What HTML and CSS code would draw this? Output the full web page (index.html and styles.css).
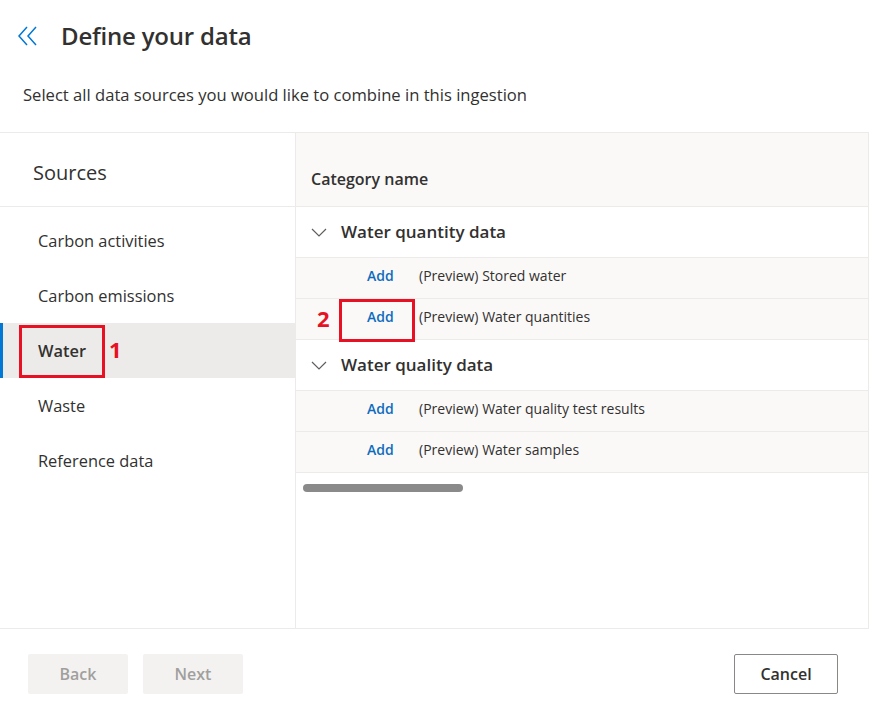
FILE: index.html
```html
<!DOCTYPE html>
<html>
<head>
<meta charset="utf-8">
<link rel="stylesheet" href="styles.css">
</head>
<body>
<div class="page">
  <header class="head">
    <div class="title-row">
      <svg class="back-icon" width="22" height="22" viewBox="0 0 22 22"><path d="M10 2 L2 11 L10 20 M19 2 L11 11 L19 20" fill="none" stroke="#0078d4" stroke-width="1.5"/></svg>
      <h1 class="title">Define your data</h1>
    </div>
    <p class="subtitle">Select all data sources you would like to combine in this ingestion</p>
  </header>
  <main class="main">
    <nav class="sources">
      <div class="sources-head">Sources</div>
      <ul class="src-list">
        <li class="src-item">Carbon activities</li>
        <li class="src-item">Carbon emissions</li>
        <li class="src-item selected"><span class="mark mark1">Water</span><span class="num num1">1</span></li>
        <li class="src-item">Waste</li>
        <li class="src-item">Reference data</li>
      </ul>
    </nav>
    <section class="cats">
      <div class="cats-head">Category name</div>
      <div class="group">
        <svg class="chev" width="16" height="10" viewBox="0 0 16 10"><path d="M1 1 L8 8 L15 1" fill="none" stroke="#605e5c" stroke-width="1.2"/></svg>
        <span>Water quantity data</span>
      </div>
      <div class="row"><span class="add">Add</span><span class="name">(Preview) Stored water</span></div>
      <div class="row"><span class="num num2">2</span><span class="add mark2">Add</span><span class="name">(Preview) Water quantities</span></div>
      <div class="group">
        <svg class="chev" width="16" height="10" viewBox="0 0 16 10"><path d="M1 1 L8 8 L15 1" fill="none" stroke="#605e5c" stroke-width="1.2"/></svg>
        <span>Water quality data</span>
      </div>
      <div class="row"><span class="add">Add</span><span class="name">(Preview) Water quality test results</span></div>
      <div class="row"><span class="add">Add</span><span class="name">(Preview) Water samples</span></div>
      <div class="scroll"><div class="thumb"></div></div>
    </section>
  </main>
  <footer class="foot">
    <div class="left-btns">
      <button class="btn disabled">Back</button>
      <button class="btn disabled">Next</button>
    </div>
    <button class="btn outline">Cancel</button>
  </footer>
</div>
</body>
</html>
```

FILE: styles.css
```css
*, *::before, *::after { box-sizing: border-box; }
html, body { margin: 0; padding: 0; background: #fff; }
body {
  font-family: "Segoe UI", "Open Sans", "Noto Sans", sans-serif;
  color: #323130;
  width: 869px;
  height: 713px;
  overflow: hidden;
}
.page { display: flex; flex-direction: column; height: 713px; }
.head { height: 132px; }
.title-row { display: flex; align-items: center; height: 72px; padding-left: 17px; padding-bottom: 2px; }
.back-icon { margin-right: 22px; margin-top: 2px; }
.title { margin: 0; font-size: 24px; font-weight: 600; color: #323130; letter-spacing: -0.2px; }
.subtitle { margin: 12px 0 0 23px; font-size: 16.6px; line-height: 22px; color: #323130; }

.main {
  display: grid;
  grid-template-columns: 296px 573px;
  height: 497px;
  border-top: 1px solid #edebe9;
  border-bottom: 1px solid #edebe9;
}
.sources { border-right: 1px solid #edebe9; }
.sources-head {
  height: 74px;
  border-bottom: 1px solid #edebe9;
  padding-left: 33px;
  font-size: 20px;
  display: flex;
  align-items: center;
  padding-top: 6px;
}
.src-list { list-style: none; margin: 6px 0 0 0; padding: 0; }
.src-item {
  height: 55px;
  display: flex;
  align-items: center;
  padding-left: 38px;
  font-size: 16.4px;
  position: relative;
}
.src-item.selected {
  background: #edebe9;
  border-left: 3px solid #0078d4;
  padding-left: 35px;
  font-weight: 600;
}
.mark1 { position: relative; }
.mark1::before {
  content: "";
  position: absolute;
  left: -19px; top: -14px;
  width: 86px; height: 53px;
  border: 3px solid #e81123;
}
.num {
  color: #e81123;
  font-weight: 700;
  font-size: 22px;
  font-family: "Open Sans", sans-serif;
}
.num1 { position: absolute; left: 106px; top: 11px; }

.cats { border-right: 1px solid #edebe9; }
.cats-head {
  height: 74px;
  background: #faf9f8;
  border-bottom: 1px solid #edebe9;
  padding: 0 0 16px 15px;
  font-size: 16px;
  font-weight: 600;
  display: flex;
  align-items: flex-end;
}
.group {
  height: 51px;
  border-bottom: 1px solid #edebe9;
  display: flex;
  align-items: center;
  padding-left: 15px;
  padding-bottom: 2px;
  font-size: 17px;
  font-weight: 600;
}
.chev { margin-right: 14px; margin-top: 3px; }
.row {
  height: 41px;
  border-bottom: 1px solid #edebe9;
  background: #faf9f8;
  display: flex;
  align-items: center;
  padding-left: 71px;
  padding-bottom: 5px;
  font-size: 14px;
  position: relative;
}
.add { color: #0f6cbd; font-weight: 600; width: 52px; }
.name { color: #323130; }
.mark2 { position: relative; }
.mark2::before {
  content: "";
  position: absolute;
  left: -28px; top: -8px;
  width: 76px; height: 43px;
  border: 3px solid #e81123;
}
.num2 { position: absolute; left: 21px; top: 4px; }
.scroll { padding: 11px 0 0 7px; }
.thumb { width: 160px; height: 8px; border-radius: 4px; background: #8a8a8a; }

.foot {
  display: flex;
  justify-content: space-between;
  padding: 25px 31px 0 28px;
}
.left-btns { display: flex; gap: 15px; }
.btn {
  width: 100px;
  height: 40px;
  font-family: inherit;
  font-size: 16px;
  font-weight: 600;
  border-radius: 2px;
}
.btn.disabled { background: #f3f2f1; border: none; color: #a19f9d; }
.btn.outline { width: 104px; background: #fff; border: 1px solid #8a8886; color: #323130; }
```
